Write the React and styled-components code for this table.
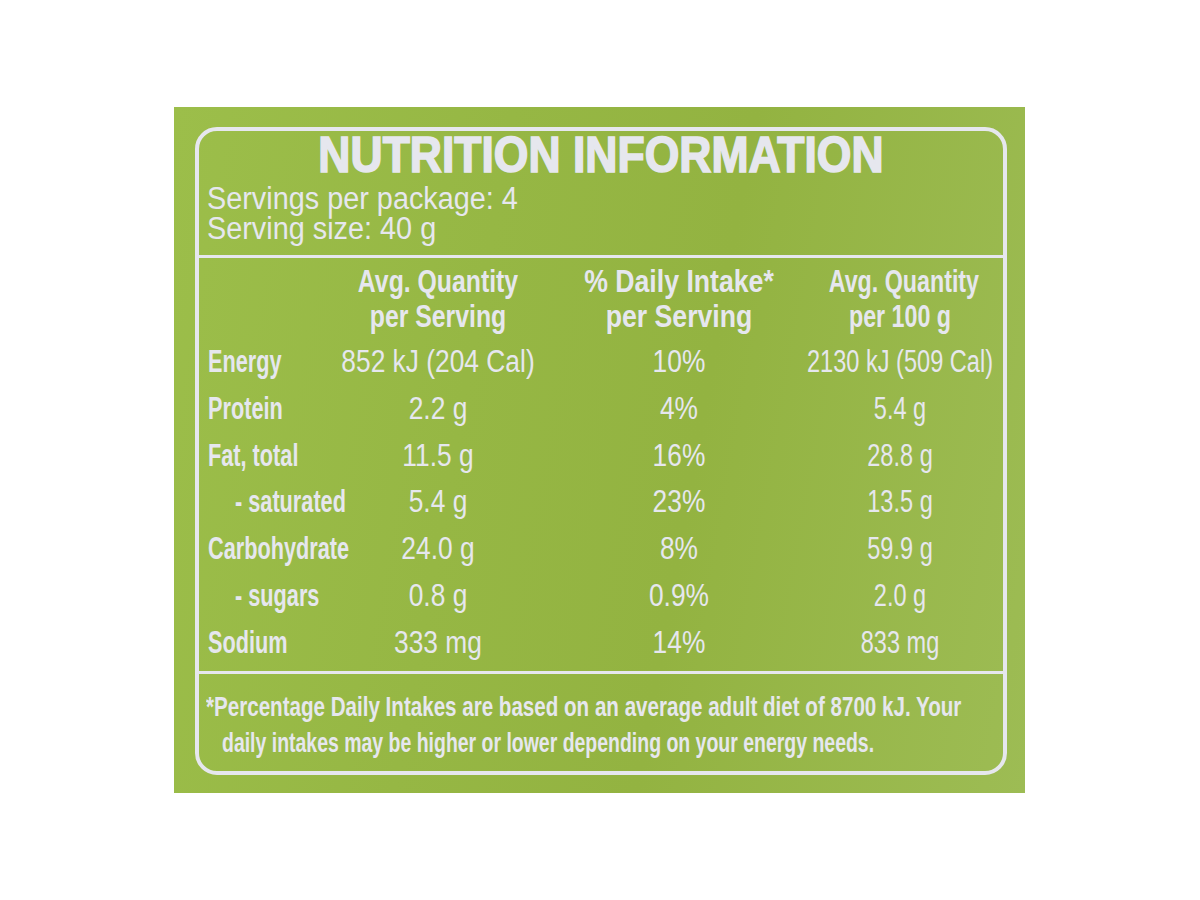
import { Fragment } from "react";
import styled, { createGlobalStyle } from "styled-components";

const rows = [
  { label: "Energy", serving: "852 kJ (204 Cal)", daily: "10%", per100: "2130 kJ (509 Cal)" },
  { label: "Protein", serving: "2.2 g", daily: "4%", per100: "5.4 g" },
  { label: "Fat, total", serving: "11.5 g", daily: "16%", per100: "28.8 g" },
  { label: "- saturated", serving: "5.4 g", daily: "23%", per100: "13.5 g", sub: true },
  { label: "Carbohydrate", serving: "24.0 g", daily: "8%", per100: "59.9 g" },
  { label: "- sugars", serving: "0.8 g", daily: "0.9%", per100: "2.0 g", sub: true },
  { label: "Sodium", serving: "333 mg", daily: "14%", per100: "833 mg" },
];

const ink = "#e6e7ee";
const columns = "115px 230px 252px 190px";

const GlobalStyle = createGlobalStyle`
  html, body {
    margin: 0;
    padding: 0;
    background: #ffffff;
  }
  body {
    font-family: "Liberation Sans", Arial, sans-serif;
  }
`;

const Page = styled.div`
  width: 1200px;
  height: 900px;
  padding: 107px 0 0 174px;
  box-sizing: border-box;
`;

const Panel = styled.div`
  width: 851px;
  height: 686px;
  box-sizing: border-box;
  padding: 20px 18px 18px 21px;
  background: linear-gradient(100deg, #9cbe4a 0%, #96b744 35%, #93b341 60%, #9dbc54 100%);
`;

const Box = styled.div`
  height: 100%;
  box-sizing: border-box;
  border: 4px solid ${ink};
  border-radius: 22px;
  color: ${ink};
  display: flex;
  flex-direction: column;
`;

const Head = styled.div`
  padding: 1px 8px 11px 8px;
  border-bottom: 3px solid ${ink};
`;

const Title = styled.h1`
  margin: 0 0 6px 0;
  font-size: 50px;
  line-height: 46px;
  font-weight: 700;
  text-align: center;
  -webkit-text-stroke: 1.6px ${ink};
  transform: scaleX(0.89);
`;

const Meta = styled.div`
  font-size: 31px;
  line-height: 30px;
  white-space: nowrap;
  transform: scaleX(0.93);
  transform-origin: left center;
`;

const Table = styled.div`
  display: flex;
  flex-direction: column;
  gap: 5px;
  padding: 6px 8px 4px 9px;
  border-bottom: 3px solid ${ink};
`;

const HeadRow = styled.div`
  display: grid;
  grid-template-columns: ${columns};
`;

const HeadCell = styled.div`
  font-size: 31px;
  line-height: 35px;
  font-weight: 700;
  text-align: center;
  white-space: nowrap;
  transform: scaleX(${(p) => p.$scale || 0.8});
`;

const Body = styled.div`
  display: grid;
  grid-template-columns: ${columns};
  grid-auto-rows: 46.8px;
`;

const Label = styled.div`
  font-size: 31px;
  line-height: 46.8px;
  font-weight: 700;
  white-space: nowrap;
  padding-left: ${(p) => (p.$sub ? "27px" : "0")};
  transform: scaleX(0.7);
  transform-origin: ${(p) => (p.$sub ? "27px" : "0")} center;
`;

const Value = styled.div`
  display: flex;
  justify-content: center;
  font-size: 31px;
  line-height: 46.8px;
  white-space: nowrap;
  transform: scaleX(${(p) => p.$scale || 0.85});
`;

const Foot = styled.div`
  padding: 15px 8px 0 7px;
  font-size: 28px;
  line-height: 36px;
  font-weight: 700;
  white-space: nowrap;
`;

const FootLine = styled.div`
  padding-left: ${(p) => (p.$indent ? "16px" : "0")};
  transform: scaleX(${(p) => p.$scale});
  transform-origin: ${(p) => (p.$indent ? "16px" : "0")} center;
`;

export default function App() {
  return (
    <>
      <GlobalStyle />
      <Page>
        <Panel>
          <Box>
            <Head>
              <Title>NUTRITION INFORMATION</Title>
              <Meta>Servings per package: 4</Meta>
              <Meta>Serving size: 40 g</Meta>
            </Head>
            <Table>
              <HeadRow>
                <div />
                <HeadCell>
                  Avg. Quantity
                  <br />
                  per Serving
                </HeadCell>
                <HeadCell $scale={0.86}>
                  % Daily Intake*
                  <br />
                  per Serving
                </HeadCell>
                <HeadCell $scale={0.75}>
                  Avg. Quantity
                  <br />
                  per 100 g
                </HeadCell>
              </HeadRow>
              <Body>
                {rows.map((r) => (
                  <Fragment key={r.label}>
                    <Label $sub={r.sub}>{r.label}</Label>
                    <Value>{r.serving}</Value>
                    <Value>{r.daily}</Value>
                    <Value $scale={0.76}>{r.per100}</Value>
                  </Fragment>
                ))}
              </Body>
            </Table>
            <Foot>
              <FootLine $scale={0.735}>
                *Percentage Daily Intakes are based on an average adult diet of 8700 kJ. Your
              </FootLine>
              <FootLine $indent $scale={0.695}>
                daily intakes may be higher or lower depending on your energy needs.
              </FootLine>
            </Foot>
          </Box>
        </Panel>
      </Page>
    </>
  );
}
